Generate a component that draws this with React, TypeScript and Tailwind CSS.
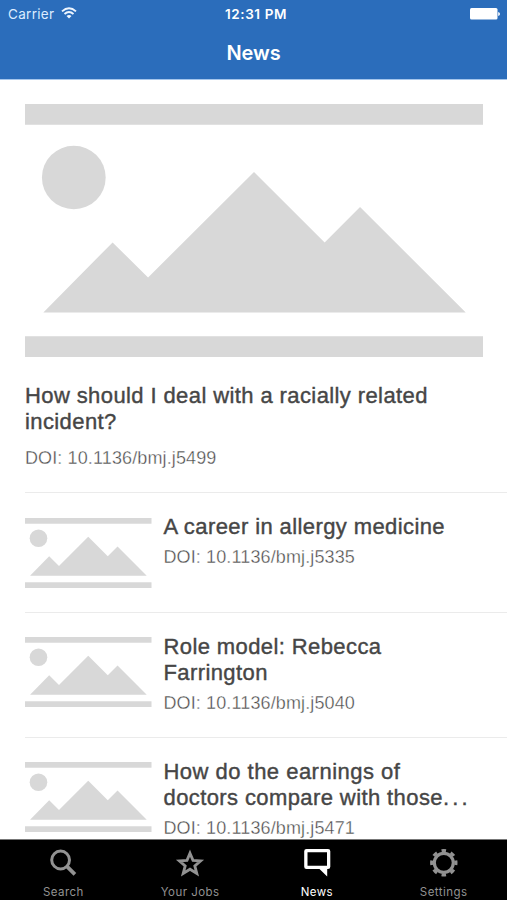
import type { ReactNode } from "react";

const titleClass =
  "font-['Liberation_Sans',Arial,sans-serif] text-[22px] leading-[26px] tracking-[0.4px] text-[#464646] [-webkit-text-stroke:0.4px_#464646]";
const doiClass =
  "font-['Liberation_Sans',Arial,sans-serif] text-[18px] leading-[22px] tracking-[0.12px] text-[#484848] [-webkit-text-stroke:0.35px_white]";

function Placeholder({ className }: { className: string }) {
  return (
    <svg viewBox="0 0 457 253.4" className={className} fill="#d8d8d8" preserveAspectRatio="none">
      <rect width="457" height="20.8" />
      <circle cx="48.7" cy="73.6" r="31.8" />
      <path d="M18.3 208.8 87.4 138.6 122.8 173.8 228.5 68 299 138.6 334.3 103.2 439.8 208.8Z" />
      <rect y="232.6" width="457" height="20.8" />
    </svg>
  );
}

function StatusBar() {
  return (
    <div className="grid h-7 grid-cols-3 items-center pl-2 pr-[7px] font-['Inter',sans-serif] text-[13.5px] text-white">
      <div className="flex items-center gap-[7px]">
        <span className="pt-px tracking-[0.3px] text-[#dcecff]">Carrier</span>
        <svg viewBox="0 0 16 12" className="-mt-0.5 h-3 w-4" fill="none" stroke="#eef6ff" strokeWidth="1.9">
          <path d="M1 4.4Q8-1.8 15 4.4" />
          <path d="M3.5 7Q8 3.1 12.5 7" />
          <path d="M5.5 9 8 11.6 10.5 9Q8 7 5.5 9Z" fill="#eef6ff" stroke="none" />
        </svg>
      </div>
      <span className="whitespace-nowrap pl-1 pt-px text-center font-semibold tracking-[0.6px]">12:31 PM</span>
      <svg viewBox="0 0 31 12" className="h-3 w-[31px] justify-self-end" fill="#fff">
        <rect x="1" width="27.5" height="11.6" rx="1.5" />
        <path d="M29.2 4Q31 4.3 31 6T29.2 8Z" />
      </svg>
    </div>
  );
}

function NewsRow({ lines, doi, className }: { lines: ReactNode[]; doi: string; className: string }) {
  const twoLines = lines.length > 1;
  return (
    <article className={`ml-[25px] flex shrink-0 gap-3 ${className}`}>
      <Placeholder className="mt-px h-[70px] w-[126.5px] shrink-0" />
      <div className={twoLines ? "-mt-[2px]" : "-mt-[3px]"}>
        <h2 className={titleClass}>
          {lines.map((line, index) => (
            <span key={index} className="block whitespace-nowrap">{line}</span>
          ))}
        </h2>
        <p className={`${doiClass} mt-[6px]`}>{doi}</p>
      </div>
    </article>
  );
}

function Tab({ label, active, children }: { label: string; active?: boolean; children: ReactNode }) {
  return (
    <div className={`flex flex-col items-center pt-[7px] ${active ? "text-white" : "text-[#929292]"}`}>
      <svg viewBox="0 0 30 30" className="h-[30px] w-[30px]" fill="none" stroke="currentColor">
        {children}
      </svg>
      <span className="mt-[7px] font-['Inter',sans-serif] text-[11.5px] leading-[16px] tracking-[0.45px]">{label}</span>
    </div>
  );
}

export default function App() {
  return (
    <div className="flex h-[900px] w-[507px] flex-col overflow-hidden bg-white">
      <header className="h-[79px] shrink-0 bg-[#2b6dbb]">
        <StatusBar />
        <h1 className="pt-[11px] text-center font-['Inter',sans-serif] text-[20px] font-semibold leading-[28px] tracking-[-0.1px] text-white">News</h1>
      </header>
      <main className="flex min-h-0 flex-1 flex-col overflow-hidden border-t border-[#a5c6ec]">
        <article className="ml-[25px] h-[413px] shrink-0 border-b border-[#ebebeb] pt-[24px]">
          <Placeholder className="h-[253px] w-[458px]" />
          <h2 className={`${titleClass} mt-[26px]`}>
            How should I deal with a racially related
            <br />
            incident?
          </h2>
          <p className={`${doiClass} mt-[12px]`}>DOI: 10.1136/bmj.j5499</p>
        </article>
        <NewsRow className="h-[120px] border-b border-[#ebebeb] pt-6" lines={["A career in allergy medicine"]} doi="DOI: 10.1136/bmj.j5335" />
        <NewsRow className="h-[125px] border-b border-[#ebebeb] pt-[23px]" lines={["Role model: Rebecca", "Farrington"]} doi="DOI: 10.1136/bmj.j5040" />
        <NewsRow
          className="h-[125px] pt-[23px]"
          lines={[
            <span className="tracking-[0.48px]">How do the earnings of</span>,
            <>doctors compare with those<span className="tracking-[3.2px]">...</span></>,
          ]}
          doi="DOI: 10.1136/bmj.j5471"
        />
      </main>
      <nav className="grid h-[61px] shrink-0 grid-cols-4 border-t border-[#777] bg-black">
        <Tab label="Search">
          <circle cx="12.6" cy="13" r="8.9" strokeWidth="3" />
          <path d="M18.9 19.3 26.9 27.3" strokeWidth="3.8" />
        </Tab>
        <Tab label="Your Jobs">
          <path d="M15 6.2 18 13.4 25.6 13.9 19.8 18.9 21.8 26.4 15 22.2 8.2 26.4 10.2 18.9 4.4 13.9 12 13.4Z" strokeWidth="2.8" />
        </Tab>
        <Tab label="News" active>
          <path d="M4.5 2H26Q28.3 2 28.3 4.3V19.7Q28.3 22 26 22H25.2V29.5L17.5 22H4.5Q2.2 22 2.2 19.7V4.3Q2.2 2 4.5 2ZM5.5 5.3V18.7H25V5.3Z" fill="currentColor" fillRule="evenodd" stroke="none" />
        </Tab>
        <Tab label="Settings">
          <circle cx="14.8" cy="15.8" r="9.5" strokeWidth="3.2" />
          <circle cx="14.8" cy="15.8" r="12.2" strokeWidth="3" pathLength="80" strokeDasharray="4.8 5.2" strokeDashoffset="2.4" />
        </Tab>
      </nav>
    </div>
  );
}
